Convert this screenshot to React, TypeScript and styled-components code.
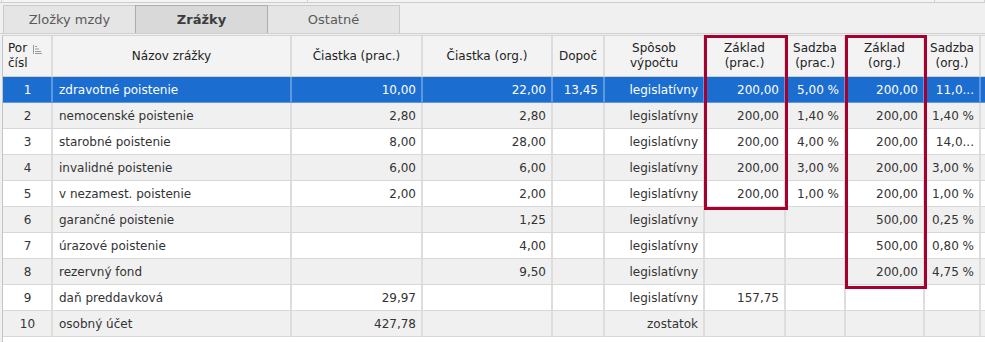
import React from 'react'
import styled, { createGlobalStyle } from 'styled-components'

const GlobalStyle = createGlobalStyle`
  html, body { margin: 0; padding: 0; background: #f0f0f0; }
  body {
    font-family: "DejaVu Sans", "Liberation Sans", sans-serif;
    font-size: 12px;
    color: #333;
  }
`

// column widths, left to right (the last one fills what is left)
const COLS = [50, 239, 131, 130, 52, 100, 81, 60, 79, 56]
const HEADER_H = 42
const ROW_H = 26
const template = COLS.map((w) => w + 'px').join(' ') + ' 1fr'

type Align = 'left' | 'center' | 'right'

interface RowData {
  por: string
  name: string
  amtEmp: string
  amtOrg: string
  extra: string
  method: string
  baseEmp: string
  rateEmp: string
  baseOrg: string
  rateOrg: string
}

const rows: RowData[] = [
  { por: '1', name: 'zdravotné poistenie', amtEmp: '10,00', amtOrg: '22,00', extra: '13,45', method: 'legislatívny', baseEmp: '200,00', rateEmp: '5,00 %', baseOrg: '200,00', rateOrg: '11,0...' },
  { por: '2', name: 'nemocenské poistenie', amtEmp: '2,80', amtOrg: '2,80', extra: '', method: 'legislatívny', baseEmp: '200,00', rateEmp: '1,40 %', baseOrg: '200,00', rateOrg: '1,40 %' },
  { por: '3', name: 'starobné poistenie', amtEmp: '8,00', amtOrg: '28,00', extra: '', method: 'legislatívny', baseEmp: '200,00', rateEmp: '4,00 %', baseOrg: '200,00', rateOrg: '14,0...' },
  { por: '4', name: 'invalidné poistenie', amtEmp: '6,00', amtOrg: '6,00', extra: '', method: 'legislatívny', baseEmp: '200,00', rateEmp: '3,00 %', baseOrg: '200,00', rateOrg: '3,00 %' },
  { por: '5', name: 'v nezamest. poistenie', amtEmp: '2,00', amtOrg: '2,00', extra: '', method: 'legislatívny', baseEmp: '200,00', rateEmp: '1,00 %', baseOrg: '200,00', rateOrg: '1,00 %' },
  { por: '6', name: 'garančné poistenie', amtEmp: '', amtOrg: '1,25', extra: '', method: 'legislatívny', baseEmp: '', rateEmp: '', baseOrg: '500,00', rateOrg: '0,25 %' },
  { por: '7', name: 'úrazové poistenie', amtEmp: '', amtOrg: '4,00', extra: '', method: 'legislatívny', baseEmp: '', rateEmp: '', baseOrg: '500,00', rateOrg: '0,80 %' },
  { por: '8', name: 'rezervný fond', amtEmp: '', amtOrg: '9,50', extra: '', method: 'legislatívny', baseEmp: '', rateEmp: '', baseOrg: '200,00', rateOrg: '4,75 %' },
  { por: '9', name: 'daň preddavková', amtEmp: '29,97', amtOrg: '', extra: '', method: 'legislatívny', baseEmp: '157,75', rateEmp: '', baseOrg: '', rateOrg: '' },
  { por: '10', name: 'osobný účet', amtEmp: '427,78', amtOrg: '', extra: '', method: 'zostatok', baseEmp: '', rateEmp: '', baseOrg: '', rateOrg: '' },
]

const Page = styled.div`
  width: 985px;
  height: 342px;
  overflow: hidden;
  display: flex;
  flex-direction: column;
`

const TopStrip = styled.div`
  display: grid;
  grid-template-columns: 2px 306px 627px 1fr;
  height: 3px;
`

const StripCell = styled.div`
  border-right: 1px solid #d2d2d2;
  border-bottom: 1px solid #cdcdcd;
  background: #f4f4f4;
`

const TabBar = styled.div`
  display: flex;
  height: 29px;
  margin-top: 2px;
  padding-left: 3px;
  border-bottom: 1px solid #d0d0d0;
  box-sizing: border-box;
`

const Tab = styled.div<{ $active?: boolean }>`
  width: 133px;
  box-sizing: border-box;
  display: flex;
  align-items: center;
  justify-content: center;
  font-size: 13px;
  border: 1px solid ${(p) => (p.$active ? '#adadad' : '#cacaca')};
  border-bottom: none;
  margin-right: -1px;
  background: ${(p) => (p.$active ? '#d9d9d9' : '#e5e5e5')};
  color: ${(p) => (p.$active ? '#3c3c3c' : '#5a5a5a')};
  font-weight: ${(p) => (p.$active ? 700 : 400)};
  position: relative;
  z-index: ${(p) => (p.$active ? 1 : 0)};
`

const Frame = styled.div`
  position: relative;
  flex: 1;
  margin-top: 1px;
  margin-left: 2px;
  border-left: 1px solid #c4c4c4;
  background: #fff;
`

const HeaderRow = styled.div`
  display: grid;
  grid-template-columns: ${template};
  height: ${HEADER_H}px;
  background: #f3f3f3;
  border-top: 1px solid #d4d4d4;
  box-sizing: border-box;
`

const HeadCell = styled.div<{ $align?: Align }>`
  box-sizing: border-box;
  display: flex;
  align-items: center;
  justify-content: ${(p) => (p.$align === 'left' ? 'flex-start' : 'center')};
  text-align: ${(p) => p.$align || 'center'};
  padding: 0 ${(p) => (p.$align === 'left' ? '0 0 5px' : '2px')};
  line-height: 15px;
  color: #222;
  border-right: 2px solid #dcdcdc;
  border-bottom: 1px solid #cfcfcf;
  white-space: pre-line;
  gap: 5px;
`

const SortMark = styled.svg`
  align-self: flex-start;
  margin-top: 9px;
`

const Row = styled.div<{ $alt?: boolean; $selected?: boolean }>`
  display: grid;
  grid-template-columns: ${template};
  height: ${ROW_H}px;
  background: ${(p) => (p.$selected ? '#1b6dd0' : p.$alt ? '#f0f0f0' : '#ffffff')};
  color: ${(p) => (p.$selected ? '#ffffff' : '#333333')};
`

const Cell = styled.div<{ $align?: Align; $selected?: boolean }>`
  box-sizing: border-box;
  display: flex;
  align-items: center;
  justify-content: ${(p) =>
    p.$align === 'right' ? 'flex-end' : p.$align === 'center' ? 'center' : 'flex-start'};
  padding: 0 5px 0 6px;
  white-space: nowrap;
  overflow: hidden;
  border-right: 2px solid ${(p) => (p.$selected ? '#5d97dd' : '#dddddd')};
  border-bottom: 1px solid ${(p) => (p.$selected ? '#5d97dd' : '#d8d8d8')};
`

const Highlight = styled.div<{ $col: number; $rows: number }>`
  position: absolute;
  top: 0;
  left: ${(p) => COLS.slice(0, p.$col).reduce((a, b) => a + b, 0) - 1}px;
  width: ${(p) => COLS[p.$col] + 3}px;
  height: ${(p) => HEADER_H + p.$rows * ROW_H + 2 + Math.floor(p.$rows / 4)}px;
  border: 3px solid #a5002e;
  box-sizing: border-box;
  pointer-events: none;
`

const headers: { label: string; align?: Align }[] = [
  { label: 'Názov zrážky' },
  { label: 'Čiastka (prac.)' },
  { label: 'Čiastka (org.)' },
  { label: 'Dopoč' },
  { label: 'Spôsob\nvýpočtu' },
  { label: 'Základ\n(prac.)' },
  { label: 'Sadzba\n(prac.)' },
  { label: 'Základ\n(org.)' },
  { label: 'Sadzba\n(org.)' },
]

const SortIcon = () => (
  <SortMark width="9" height="9" viewBox="0 0 9 9">
    <g stroke="#9a9a9a" strokeWidth="1">
      <line x1="0.5" y1="0" x2="0.5" y2="9" />
      <line x1="2" y1="1.5" x2="4" y2="1.5" />
      <line x1="2" y1="4" x2="6" y2="4" />
      <line x1="2" y1="6.5" x2="8" y2="6.5" />
      <line x1="2" y1="8.5" x2="9" y2="8.5" />
    </g>
  </SortMark>
)

const App = () => {
  return (
    <Page>
      <GlobalStyle />
      <TopStrip>
        <StripCell />
        <StripCell />
        <StripCell />
        <StripCell />
      </TopStrip>
      <TabBar>
        <Tab>Zložky mzdy</Tab>
        <Tab $active>Zrážky</Tab>
        <Tab>Ostatné</Tab>
      </TabBar>
      <Frame>
        <HeaderRow>
          <HeadCell $align="left">
            <span>{'Por\nčísl'}</span>
            <SortIcon />
          </HeadCell>
          {headers.map((h) => (
            <HeadCell key={h.label} $align={h.align}>
              {h.label}
            </HeadCell>
          ))}
          <HeadCell />
        </HeaderRow>
        {rows.map((r, i) => {
          const sel = i === 0
          const cells: [string, Align][] = [
            [r.por, 'center'],
            [r.name, 'left'],
            [r.amtEmp, 'right'],
            [r.amtOrg, 'right'],
            [r.extra, 'right'],
            [r.method, 'right'],
            [r.baseEmp, 'right'],
            [r.rateEmp, 'right'],
            [r.baseOrg, 'right'],
            [r.rateOrg, 'right'],
            ['', 'left'],
          ]
          return (
            <Row key={r.por} $alt={i % 2 === 1} $selected={sel}>
              {cells.map(([v, a], j) => (
                <Cell key={j} $align={a} $selected={sel}>
                  {v}
                </Cell>
              ))}
            </Row>
          )
        })}
        <Highlight $col={6} $rows={5} />
        <Highlight $col={8} $rows={8} />
      </Frame>
    </Page>
  )
}

export default App
